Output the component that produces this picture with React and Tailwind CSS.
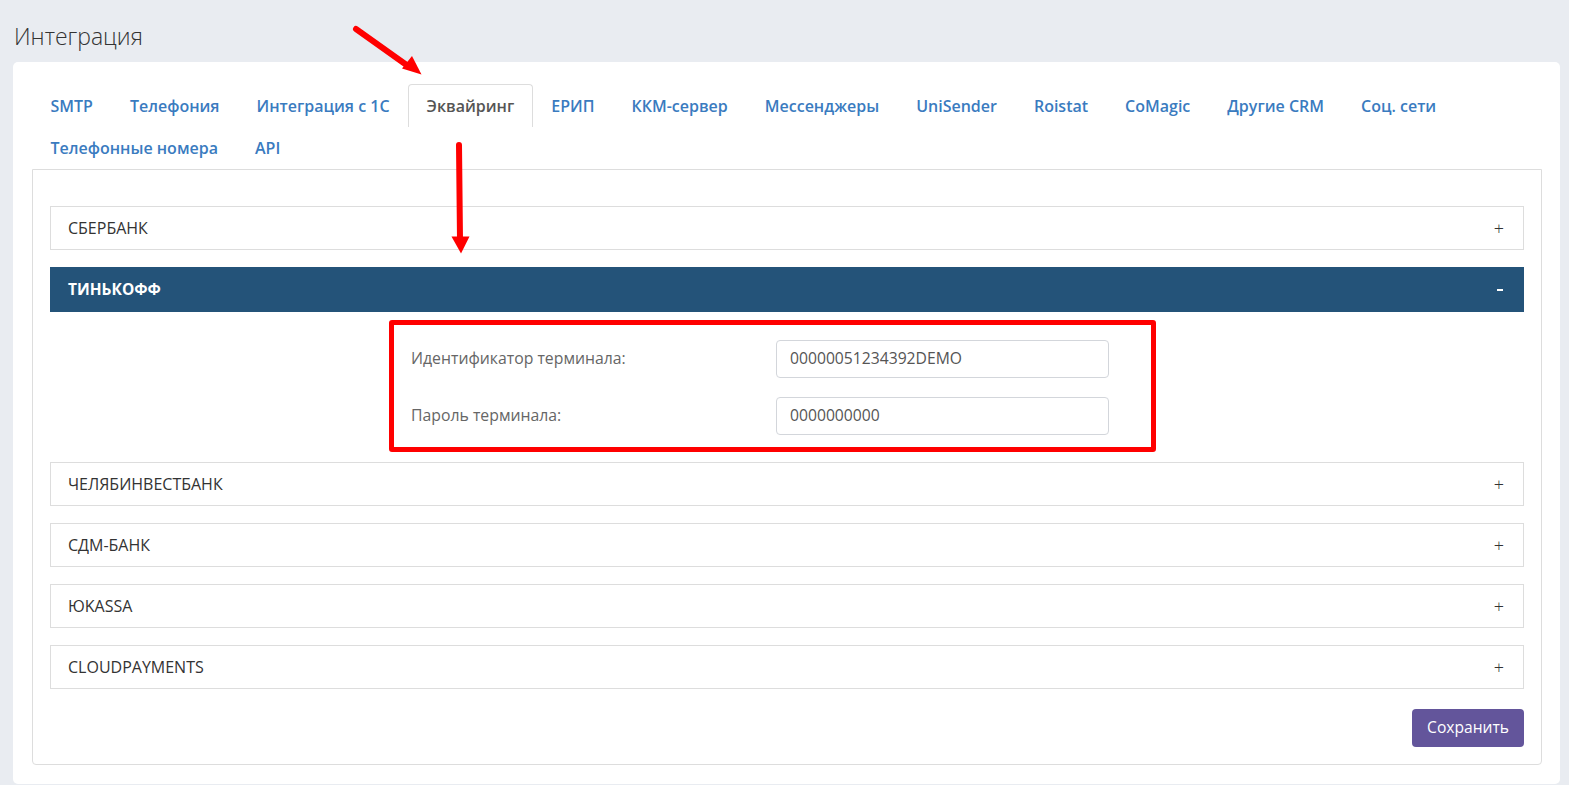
import React from "react";

const tabsRow1 = [
  "SMTP",
  "Телефония",
  "Интеграция с 1С",
  "Эквайринг",
  "ЕРИП",
  "ККМ-сервер",
  "Мессенджеры",
  "UniSender",
  "Roistat",
  "CoMagic",
  "Другие CRM",
  "Соц. сети",
];
const tabsRow2 = ["Телефонные номера", "API"];

function Tab({ label, active }) {
  if (active) {
    return (
      <div className="h-[43px] px-[17.5px] flex items-center border border-b-0 border-[#dddddd] rounded-t-[4px] bg-white text-[16px] font-semibold text-[#555]">
        {label}
      </div>
    );
  }
  return (
    <div className="h-[43px] px-[18.5px] flex items-center text-[16px] font-semibold text-[#3a7bbf]">
      {label}
    </div>
  );
}

function Item({ title }) {
  return (
    <div className="h-[44px] border border-[#dddddd] flex items-center justify-between pl-[17px] pr-[19px] mb-[17px]">
      <span className="text-[16px] font-medium text-[#333] uppercase">{title}</span>
      <span className="text-[18px] leading-none font-light text-[#333]">+</span>
    </div>
  );
}

function Field({ label, value }) {
  return (
    <div className="flex items-center">
      <div className="w-[365px] text-[15.8px] text-[#666]">{label}</div>
      <div className="w-[333px] h-[38px] border border-[#d3d6db] rounded-[4px] flex items-center px-[13px] text-[15.7px] text-[#555]">
        {value}
      </div>
    </div>
  );
}

export default function App() {
  return (
    <div
      className="relative min-h-[785px] bg-[#e9ecf1] pl-[13px] pr-[9px] pt-[18px] pb-[2px]"
      style={{ fontFamily: '"Open Sans", "Noto Sans", sans-serif' }}
    >
      <h1 className="pl-[1px] text-[23px] leading-[36px] font-light text-[#333]">Интеграция</h1>

      <div className="mt-[8px] bg-white rounded-[5px] pl-[19px] pr-[18px] pt-[22px] pb-[19px]">
        {/* tab strip */}
        <div className="flex flex-wrap">
          {tabsRow1.map((t) => (
            <Tab key={t} label={t} active={t === "Эквайринг"} />
          ))}
        </div>
        <div className="flex h-[42px]">
          {tabsRow2.map((t) => (
            <div key={t} className="h-[42px] px-[18.5px] flex items-center text-[16px] font-semibold text-[#3a7bbf]">
              {t}
            </div>
          ))}
        </div>

        {/* tab panel */}
        <div className="border border-[#dddddd] rounded-b-[4px] px-[17px] pt-[36px] pb-[17px]">
          <Item title="Сбербанк" />

          <div className="h-[45px] bg-[#245379] flex items-center justify-between pl-[18px] pr-[21px]">
            <span className="text-[15.5px] font-bold text-white uppercase">Тинькофф</span>
            <span className="w-[6px] h-[2px] bg-white" />
          </div>

          <div className="pl-[339px] pt-[8px] pb-[10px]">
            <div className="w-[767px] h-[132px] border-[5px] border-[#ff0000] rounded-[3px] pl-[17px] pt-[15px] flex flex-col gap-[19px]">
              <Field label="Идентификатор терминала:" value="00000051234392DEMO" />
              <Field label="Пароль терминала:" value="0000000000" />
            </div>
          </div>

          <Item title="Челябинвестбанк" />
          <Item title="СДМ-Банк" />
          <Item title="ЮKassa" />
          <Item title="CloudPayments" />

          <div className="flex justify-end mt-[20px]">
            <button className="h-[38px] px-[15px] rounded-[4px] bg-[#63559b] text-white text-[15.6px]">
              Сохранить
            </button>
          </div>
        </div>
      </div>

      {/* red pointer arrows */}
      <svg
        className="absolute left-0 top-0 pointer-events-none"
        width="1569"
        height="785"
        viewBox="0 0 1569 785"
      >
        <line x1="356" y1="29" x2="408" y2="66" stroke="#ff0000" strokeWidth="6" strokeLinecap="round" />
        <polygon points="421.5,74.5 402,68.5 412,56" fill="#ff0000" />
        <line x1="459" y1="145" x2="460" y2="240" stroke="#ff0000" strokeWidth="6" strokeLinecap="round" />
        <polygon points="451.5,236.5 469.5,236.5 461,253.5" fill="#ff0000" />
      </svg>
    </div>
  );
}
